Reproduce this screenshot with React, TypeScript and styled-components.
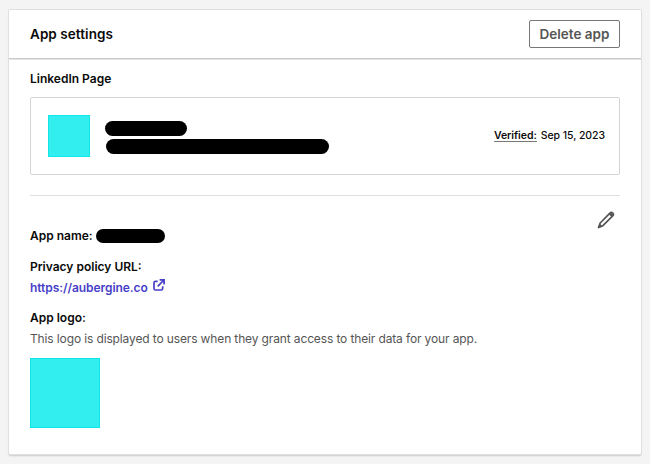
import React from "react";
import styled, { createGlobalStyle } from "styled-components";

const GlobalStyle = createGlobalStyle`
  * { box-sizing: border-box; }
  body {
    margin: 0;
    background: #f4f4f4;
    color: #0a0a0a;
    font-family: Inter, "Liberation Sans", sans-serif;
    font-size: 12px;
    line-height: 16px;
  }
  h1, h2, p { margin: 0; }
`;

const Page = styled.main`
  height: 464px;
  padding: 10px 8px 10px 9px;
  overflow: hidden;
`;

const Card = styled.section`
  height: 444px;
  width: 632px;
  background: #fff;
  border-radius: 1px;
  box-shadow: 0 0 0 1px #dfdfdf, 0 1px 1px 0 #a8a8a8, 0 2px 2px 0 rgba(0, 0, 0, 0.15);
`;

const Header = styled.header`
  height: 49px;
  display: flex;
  align-items: center;
  justify-content: space-between;
  padding: 0 21px;
  border-bottom: 1px solid #cbcbcb;
`;

const Title = styled.h1`
  font-size: 13.5px;
  font-weight: 600;
  line-height: 18px;
  letter-spacing: 0.06px;
`;

const DeleteButton = styled.button`
  width: 91px;
  height: 28px;
  padding: 0;
  border: 1px solid #777;
  border-radius: 2px;
  background: #fff;
  color: #555;
  font: 600 13.5px/18px Inter, "Liberation Sans", sans-serif;
`;

const Body = styled.div`
  padding: 11px 21px 0;
  border-top: 1px solid #e4e4e4;
`;

const Label = styled.h2`
  font-size: 12px;
  font-weight: 600;
  line-height: 16px;
`;

const PageBox = styled.div`
  height: 78px;
  margin-top: 10px;
  padding: 0 14px 0 17px;
  display: flex;
  align-items: center;
  border: 1px solid #d5d5d5;
  border-radius: 2px;
`;

const Swatch = styled.div<{ $size: number }>`
  width: ${(p) => p.$size}px;
  height: ${(p) => p.$size}px;
  flex: none;
  background: #33eeee;
  border: 1px solid #10e6e8;
`;

const Redactions = styled.div`
  display: grid;
  gap: 3px;
  margin: 2px 0 0 15px;
`;

const Redaction = styled.span<{ $width: number; $height: number; $indent?: number }>`
  display: block;
  width: ${(p) => p.$width}px;
  height: ${(p) => p.$height}px;
  margin-left: ${(p) => p.$indent ?? 0}px;
  border-radius: 8px;
  background: #000;
`;

const Verified = styled.p`
  margin-left: auto;
  display: flex;
  align-items: flex-start;
  gap: 4px;
  font-size: 10.5px;
  font-weight: 500;
  line-height: 14px;
  letter-spacing: -0.06px;
  white-space: nowrap;
`;

const VerifiedLabel = styled.span`
  height: 13px;
  font-weight: 600;
  border-bottom: 1px solid #777;
`;

const Details = styled.div`
  margin-top: 20px;
  padding-top: 15px;
  border-top: 1px solid #dfdfdf;
`;

const EditRow = styled.div`
  height: 17px;
  display: flex;
  justify-content: flex-end;
  padding-right: 5px;
`;

const NameRow = styled.div`
  display: flex;
  align-items: center;
  gap: 3px;
`;

const Field = styled.div<{ $gap: number }>`
  margin-top: ${(p) => p.$gap}px;
`;

const PolicyLink = styled.a`
  display: flex;
  width: max-content;
  gap: 5px;
  margin-top: 5px;
  color: #483fc8;
  font-weight: 600;
  letter-spacing: -0.06px;
  text-decoration: none;

  svg { margin-top: -1px; }
`;

const Hint = styled.p`
  margin: 5px 0 11px;
  color: #555;
  letter-spacing: -0.13px;
  white-space: nowrap;
`;

const PencilIcon = () => (
  <svg width="18" height="18" viewBox="0 0 18 18" fill="none" stroke="#555" strokeWidth="1.7" strokeLinejoin="round">
    <path d="M1.5 16.5 3.2 12 12.9 2.2Q14.4.8 15.8 2.1 17.1 3.5 15.7 4.9L5.9 14.7Z" />
    <path d="m12.9 2.5 2.6 2.5" strokeWidth="2.6" />
    <path d="m1.1 16.9 1.5-4.5 3 3Z" fill="#555" stroke="none" />
  </svg>
);

const ExternalIcon = () => (
  <svg width="12" height="12" viewBox="0 0 12 12" fill="none" stroke="currentColor" strokeWidth="1.7">
    <path d="M4.7 2.3H2.5Q1 2.3 1 3.8v5.7Q1 11 2.5 11h5.7Q9.7 11 9.7 9.5V7.3" />
    <path d="M6.6.9h4.5v4.5M11 1 4.7 7.3" />
  </svg>
);

export default function App() {
  return (
    <>
      <GlobalStyle />
      <Page>
        <Card>
          <Header>
            <Title>App settings</Title>
            <DeleteButton>Delete app</DeleteButton>
          </Header>
          <Body>
            <Label>LinkedIn Page</Label>
            <PageBox>
              <Swatch $size={42} />
              <Redactions>
                <Redaction $width={82} $height={15} />
                <Redaction $width={223} $height={15} $indent={1} />
              </Redactions>
              <Verified>
                <VerifiedLabel>Verified:</VerifiedLabel>
                <span>Sep 15, 2023</span>
              </Verified>
            </PageBox>
            <Details>
              <EditRow>
                <PencilIcon />
              </EditRow>
              <NameRow>
                <Label>App name:</Label>
                <Redaction $width={69} $height={14} />
              </NameRow>
              <Field $gap={15}>
                <Label>Privacy policy URL:</Label>
                <PolicyLink href="#">
                  <span>https://aubergine.co</span>
                  <ExternalIcon />
                </PolicyLink>
              </Field>
              <Field $gap={14}>
                <Label>App logo:</Label>
                <Hint>This logo is displayed to users when they grant access to their data for your app.</Hint>
                <Swatch $size={70} />
              </Field>
            </Details>
          </Body>
        </Card>
      </Page>
    </>
  );
}
